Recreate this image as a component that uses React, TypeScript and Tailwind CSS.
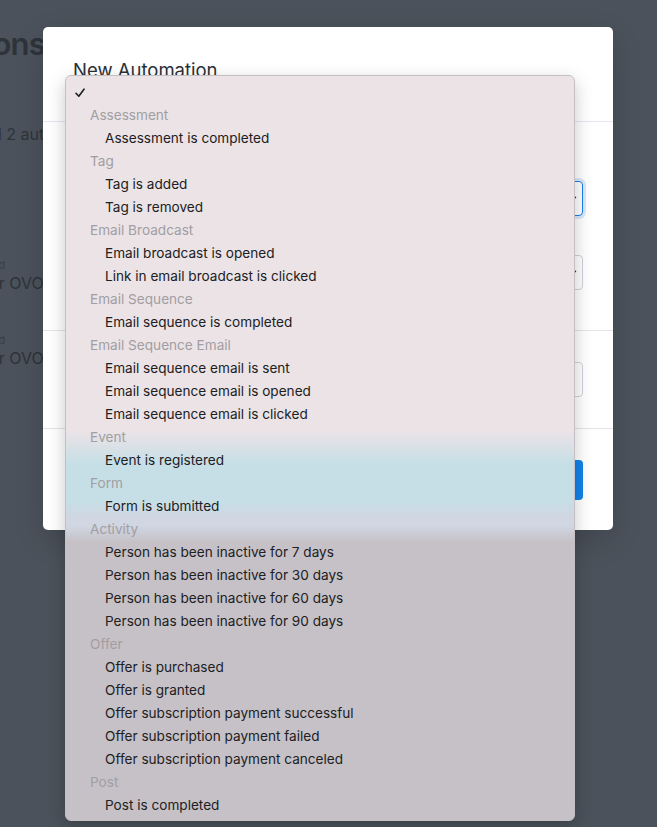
import { ChevronDown } from "lucide-react";

type Group = { label: string; items: string[] };

const groups: Group[] = [
	{ label: "Assessment", items: ["Assessment is completed"] },
	{ label: "Tag", items: ["Tag is added", "Tag is removed"] },
	{ label: "Email Broadcast", items: ["Email broadcast is opened", "Link in email broadcast is clicked"] },
	{ label: "Email Sequence", items: ["Email sequence is completed"] },
	{
		label: "Email Sequence Email",
		items: ["Email sequence email is sent", "Email sequence email is opened", "Email sequence email is clicked"],
	},
	{ label: "Event", items: ["Event is registered"] },
	{ label: "Form", items: ["Form is submitted"] },
	{
		label: "Activity",
		items: [
			"Person has been inactive for 7 days",
			"Person has been inactive for 30 days",
			"Person has been inactive for 60 days",
			"Person has been inactive for 90 days",
		],
	},
	{
		label: "Offer",
		items: [
			"Offer is purchased",
			"Offer is granted",
			"Offer subscription payment successful",
			"Offer subscription payment failed",
			"Offer subscription payment canceled",
		],
	},
	{ label: "Post", items: ["Post is completed"] },
];

function PageBehind() {
	return (
		<div className="flex flex-col text-[#2e333a]">
			<div className="flex h-[72px] w-[45px] items-center justify-end whitespace-nowrap pt-[14px]">
				<h1 className="text-[31px] font-semibold leading-none tracking-tight">Automations</h1>
			</div>
			<div className="mt-[52px] -ml-[35px] whitespace-nowrap text-[16px] leading-[20px]">Total 2 automations</div>
			<div className="mt-[114px] flex flex-col">
				<div className="-ml-[36px] whitespace-nowrap text-[11px] leading-[14px] text-[#3a3f46]">Created</div>
				<div className="-ml-[30px] mt-[1px] whitespace-nowrap text-[16px] leading-[20px]">Your OVO Funnel</div>
			</div>
			<div className="mt-[40px] flex flex-col">
				<div className="-ml-[36px] whitespace-nowrap text-[11px] leading-[14px] text-[#3a3f46]">Created</div>
				<div className="-ml-[30px] mt-[1px] whitespace-nowrap text-[16px] leading-[20px]">Your OVO Course</div>
			</div>
		</div>
	);
}

function Modal() {
	return (
		<div className="absolute left-[43px] top-[27px] w-[570px] rounded-[5px] bg-white shadow-[0_10px_30px_rgba(0,0,0,0.15)]">
			<div className="h-[95px] border-b border-[#e6e6ee] px-[30px] pt-[31px]">
				<h2 className="text-[18.5px] leading-[24px] text-[#2b3038]">New Automation</h2>
			</div>
			<div className="flex flex-col gap-[39px] border-b border-[#e3e3e8] px-[30px] pb-[40px] pt-[59px]">
				<div className="relative h-[35px] rounded-[4px] border-[1.5px] border-[#1a7fe8] shadow-[0_0_0_3px_rgba(26,127,232,0.16)]">
					<ChevronDown className="absolute right-[3px] top-[10px] h-[14px] w-[14px] text-[#333]" strokeWidth={2.5} />
				</div>
				<div className="relative h-[35px] rounded-[4px] border border-[#cfd3da]">
					<ChevronDown className="absolute right-[3px] top-[10px] h-[14px] w-[14px] text-[#333]" strokeWidth={2.5} />
				</div>
			</div>
			<div className="border-b border-[#e3e3e8] px-[30px] py-[31px]">
				<div className="h-[35px] rounded-[4px] border border-[#cfd3da]" />
			</div>
			<div className="flex justify-end px-[30px] pb-[30px] pt-[31px]">
				<div className="h-[40px] w-[150px] rounded-[4px] bg-[#1183ec]" />
			</div>
		</div>
	);
}

function Check() {
	return (
		<svg width="10" height="10" viewBox="0 0 10 10" className="text-[#1d1d1f]">
			<path d="M1 5.3 L3.8 8.2 L9 1.2" fill="none" stroke="currentColor" strokeWidth="1.6" strokeLinecap="round" strokeLinejoin="round" />
		</svg>
	);
}

function Dropdown() {
	return (
		<div className="absolute left-[65px] top-[75px] w-[510px] rounded-[6px] border border-[#c4bfc3] bg-[linear-gradient(180deg,#ebe3e6_0px,#ebe3e6_355px,#c6dfe6_388px,#c6dfe6_425px,#d0d6e2_440px,#d0d6e2_450px,#c6c1c7_466px,#c6c1c7_100%)] pb-[3px] pt-[5px] text-[13.6px] shadow-[0_6px_18px_rgba(0,0,0,0.22)]">
			<div className="flex h-[23px] items-center pl-[9px]">
				<Check />
			</div>
			{groups.map((g) => (
				<div key={g.label}>
					<div className="flex h-[23px] items-center pl-[24px] text-[#a19ea2]">{g.label}</div>
					{g.items.map((item) => (
						<div key={item} className="flex h-[23px] items-center pl-[39px] text-[#202022]">
							{item}
						</div>
					))}
				</div>
			))}
		</div>
	);
}

export default function App() {
	return (
		<div className="relative h-[827px] w-[657px] overflow-hidden bg-[#4b525b] font-['Inter','Liberation_Sans',sans-serif]">
			<PageBehind />
			<Modal />
			<Dropdown />
		</div>
	);
}
